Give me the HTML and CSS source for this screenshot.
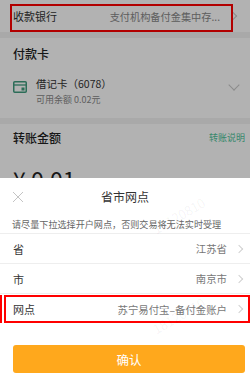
FILE: index.html
```html
<!DOCTYPE html>
<html lang="zh">
<head>
<meta charset="utf-8">
<link rel="stylesheet" href="styles.css">
</head>
<body>
<div class="screen">
  <div class="page">
    <div class="row bank">
      <span class="label">收款银行</span>
      <span class="value">支付机构备付金集中存...</span>
      <span class="chev"></span>
      <span class="mark mark-bank"></span>
    </div>
    <div class="section">
      <div class="sec-head"><span class="sec-title">付款卡</span></div>
      <div class="card-row">
        <svg class="card-icon" width="14" height="12" viewBox="0 0 14 12">
          <rect x="0.75" y="0.75" width="12.5" height="10.5" rx="1" fill="none" stroke="#3f9c7f" stroke-width="1.5"/>
          <line x1="1" y1="4" x2="13" y2="4" stroke="#3f9c7f" stroke-width="1.3"/>
          <rect x="8.5" y="6.5" width="3" height="3" fill="#3f9c7f"/>
        </svg>
        <div class="card-info">
          <div class="card-name">借记卡（6078）</div>
          <div class="card-bal">可用余额 0.02元</div>
        </div>
        <span class="chev-down"></span>
      </div>
    </div>
    <div class="section amount-sec">
      <div class="sec-head">
        <span class="sec-title">转账金额</span>
        <span class="link">转账说明</span>
      </div>
      <div class="amount">¥ 0.01</div>
    </div>
  </div>
  <div class="mask"></div>
  <div class="sheet">
    <div class="sheet-head">
      <svg class="close" width="12" height="12" viewBox="0 0 12 12">
        <path d="M1 1 L11 11 M11 1 L1 11" stroke="#c4c4c4" stroke-width="1" fill="none"/>
      </svg>
      <span class="sheet-title">省市网点</span>
    </div>
    <div class="hint">请尽量下拉选择开户网点，否则交易将无法实时受理</div>
    <div class="opt">
      <span class="opt-label">省</span>
      <span class="opt-value">江苏省</span>
      <span class="chev light"></span>
    </div>
    <div class="opt">
      <span class="opt-label">市</span>
      <span class="opt-value">南京市</span>
      <span class="chev light"></span>
    </div>
    <div class="opt last">
      <span class="opt-label">网点</span>
      <span class="opt-value">苏宁易付宝–备付金账户</span>
      <span class="chev light"></span>
      <span class="mark mark-branch"></span>
      <span class="mark mark-edge"></span>
    </div>
    <div class="btn-wrap"><div class="btn">确认</div></div>
    <span class="wm wm1">18120810</span>
    <span class="wm wm2">18120810</span>
  </div>
</div>
</body>
</html>
```
FILE: styles.css
```css
* { box-sizing: border-box; }
html, body { margin: 0; padding: 0; }
body {
  width: 250px;
  height: 376px;
  overflow: hidden;
  font-family: "Noto Sans CJK SC", "Noto Sans", sans-serif;
  background: #fff;
}
.screen {
  position: relative;
  width: 250px;
  height: 376px;
  overflow: hidden;
}
.page {
  background: #f2f2f2;
  height: 376px;
  display: flex;
  flex-direction: column;
  gap: 6px;
}
.row {
  position: relative;
  background: #fff;
  display: flex;
  align-items: center;
}
.bank {
  height: 32px;
  padding: 0 12px 0 13px;
}
.label {
  font-size: 11px;
  color: #333;
}
.value {
  margin-left: auto;
  font-size: 10.2px;
  color: #888;
  margin-right: 10px;
}
.chev {
  width: 6px;
  height: 6px;
  border-top: 1px solid #c8c8c8;
  border-right: 1px solid #c8c8c8;
  transform: rotate(45deg);
  margin-right: 2px;
}
.mark {
  position: absolute;
  border: 2px solid #ff0000;
}
.mark-bank {
  left: 10px;
  top: 4px;
  width: 223px;
  height: 28px;
}
.section {
  background: #fff;
  display: flex;
  flex-direction: column;
}
.sec-head {
  height: 30px;
  display: flex;
  align-items: center;
  justify-content: space-between;
  padding: 0 5px 0 13px;
}
.sec-title {
  font-size: 12px;
  font-weight: 500;
  color: #222;
}
.link {
  font-size: 9px;
  color: #50c49a;
}
.card-row {
  height: 50px;
  display: flex;
  align-items: flex-start;
  padding: 8px 12px 0 13px;
}
.card-icon {
  margin-top: 5px;
  flex: none;
}
.card-info {
  margin-left: 9px;
  display: flex;
  flex-direction: column;
}
.card-name {
  font-size: 10.5px;
  color: #333;
  line-height: 16px;
}
.card-bal {
  font-size: 9px;
  color: #888;
  line-height: 13px;
  margin-top: 1px;
}
.chev-down {
  margin-left: auto;
  margin-top: 5px;
  width: 8px;
  height: 8px;
  border-right: 1px solid #c8c8c8;
  border-bottom: 1px solid #c8c8c8;
  transform: rotate(45deg);
}
.amount-sec { flex: 1; }
.amount-sec .sec-head { height: 26px; }
.amount {
  font-size: 23px;
  color: #222;
  padding: 14px 0 0 13px;
  line-height: 30px;
}
.mask {
  position: absolute;
  inset: 0;
  background: rgba(0, 0, 0, 0.3);
}
.sheet {
  position: absolute;
  left: 0;
  right: 0;
  top: 178px;
  bottom: 0;
  background: #fff;
  display: flex;
  flex-direction: column;
  overflow: hidden;
}
.sheet-head {
  position: relative;
  height: 37px;
  display: flex;
  align-items: center;
  justify-content: center;
}
.close {
  position: absolute;
  left: 12px;
  top: 13px;
}
.sheet-title {
  font-size: 12px;
  color: #333;
}
.hint {
  font-size: 9.1px;
  color: #666;
  padding: 1px 0 0 12px;
  height: 19px;
  line-height: 16px;
  border-bottom: 1px solid #eee;
  white-space: nowrap;
}
.opt {
  position: relative;
  height: 30px;
  display: flex;
  align-items: center;
  padding: 0 6px 0 13px;
  border-bottom: 1px solid #eee;
}
.opt.last { border-bottom: none; }
.opt-label {
  font-size: 11px;
  color: #333;
}
.opt-value {
  margin-left: auto;
  font-size: 10.4px;
  color: #777;
  margin-right: 9px;
}
.chev.light {
  border-color: #d0d0d0;
}
.mark-branch {
  left: 4px;
  top: 1px;
  right: 0;
  height: 28px;
}
.mark-edge {
  left: -2px;
  top: 1px;
  width: 4px;
  height: 28px;
  border-width: 0 2px 0 0;
}
.btn-wrap {
  padding: 21px 5px 0 13px;
}
.btn {
  height: 28px;
  border-radius: 3px;
  background: #ffa81c;
  color: #fff;
  font-size: 12.5px;
  display: flex;
  align-items: center;
  justify-content: center;
}
.wm {
  position: absolute;
  font-size: 13px;
  color: rgba(0, 0, 0, 0.05);
  transform: rotate(-30deg);
  pointer-events: none;
  white-space: nowrap;
}
.wm1 { left: 150px; top: 28px; }
.wm2 { left: 150px; top: 128px; }
```
